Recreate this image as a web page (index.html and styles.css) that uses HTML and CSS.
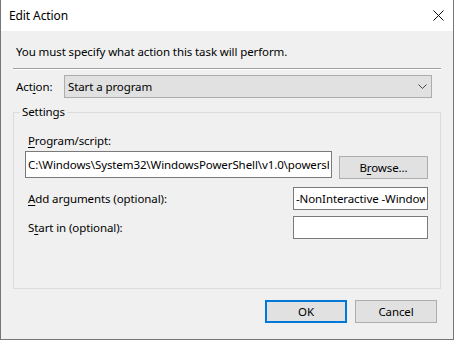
FILE: index.html
```html
<!DOCTYPE html>
<html lang="en">
<head>
    <meta charset="UTF-8">
    <meta name="viewport" content="width=device-width, initial-scale=1.0">
    <title>Edit Action</title>
    <link rel="stylesheet" href="styles.css">
</head>
<body>

    <div class="window">
        <div class="titlebar">
            <span class="title">Edit Action</span>
            <svg class="close" width="11" height="11" viewBox="0 0 11 11">
                <path d="M0.5 0.5 L10.5 10.5 M10.5 0.5 L0.5 10.5" stroke="#111" stroke-width="1" fill="none"/>
            </svg>
        </div>

        <div class="content">
            <p class="intro">You must specify what action this task will perform.</p>
            <div class="separator"></div>

            <div class="action-row">
                <label class="action-label">Act<u>i</u>on:</label>
                <div class="combo">
                    <span>Start a program</span>
                    <svg class="chevron" width="9" height="5" viewBox="0 0 9 5">
                        <path d="M0.5 0.5 L4.5 4.5 L8.5 0.5" stroke="#444" stroke-width="1" fill="none"/>
                    </svg>
                </div>
            </div>

            <fieldset class="settings">
                <legend>Settings</legend>
                <label class="field-label"><u>P</u>rogram/script:</label>
                <div class="program-row">
                    <input class="textbox program" type="text" value="C:\Windows\System32\WindowsPowerShell\v1.0\powershell.exe">
                    <button class="btn browse">B<u>r</u>owse...</button>
                </div>
                <div class="option-grid">
                    <label class="field-label"><u>A</u>dd arguments (optional):</label>
                    <input class="textbox" type="text" value="-NonInteractive -WindowStyle Hidden">
                    <label class="field-label">S<u>t</u>art in (optional):</label>
                    <input class="textbox" type="text" value="">
                </div>
            </fieldset>

            <div class="button-row">
                <button class="btn btn-default">OK</button>
                <button class="btn">Cancel</button>
            </div>
        </div>
    </div>

</body>
</html>
```

FILE: styles.css
```css
* {
    margin: 0;
    padding: 0;
    box-sizing: border-box;
}
body {
    font-family: "Noto Sans", "Open Sans", sans-serif;
    font-size: 11.5px;
    letter-spacing: -0.1px;
    line-height: 16px;
    color: #000;
    overflow: hidden;
    background-color: #fff;
}
u {
    text-decoration-thickness: 1px;
    text-underline-offset: 2px;
}
.window {
    width: 454px;
    height: 340px;
    display: flex;
    flex-direction: column;
    border: 1px solid #767676;
    border-top: none;
    background-color: #f0f0f0;
}
.titlebar {
    height: 31px;
    flex-shrink: 0;
    display: flex;
    justify-content: space-between;
    align-items: center;
    background-color: #fff;
    padding: 0 9px 0 8px;
}
.title {
    font-size: 12px;
}
.close {
    display: block;
}
.content {
    flex: 1;
    padding: 0 12px;
}
.intro {
    margin-top: 13px;
    padding-left: 3px;
}
.separator {
    margin-top: 8px;
    border-top: 1px solid #a0a0a0;
    border-bottom: 1px solid #fff;
}
.action-row {
    display: flex;
    align-items: center;
    margin-top: 5px;
    padding-left: 3px;
}
.action-label {
    width: 48px;
}
.combo {
    flex: 1;
    height: 23px;
    margin-right: 9px;
    display: flex;
    justify-content: space-between;
    align-items: center;
    padding: 0 4px 0 3px;
    background-color: #e1e1e1;
    border: 1px solid #adadad;
}
.chevron {
    display: block;
}
.settings {
    margin-top: 6px;
    border: 1px solid #dcdcdc;
    padding: 13px 12px 49px 11px;
}
.settings legend {
    margin-left: -5px;
    padding: 0 2px;
    line-height: 16px;
}
.field-label {
    display: block;
    padding-left: 3px;
}
.program-row {
    display: flex;
    align-items: flex-start;
    margin-top: 2px;
}
.textbox {
    font-family: inherit;
    font-size: inherit;
    letter-spacing: inherit;
    color: #000;
    height: 23px;
    padding: 0 2px;
    border: 1px solid #7a7a7a;
    background-color: #fff;
    outline: none;
}
.textbox.program {
    width: 307px;
    height: 27px;
}
.btn {
    font-family: inherit;
    font-size: inherit;
    letter-spacing: inherit;
    color: #000;
    width: 82px;
    height: 23px;
    background-color: #e1e1e1;
    border: 1px solid #adadad;
}
.btn.browse {
    width: 89px;
    margin-left: 7px;
    margin-top: 5px;
}
.btn-default {
    border: 2px solid #0078d7;
}
.option-grid {
    display: grid;
    grid-template-columns: 1fr 135px;
    align-items: center;
    row-gap: 6px;
    margin-top: 8px;
}
.option-grid .textbox {
    width: 135px;
}
.button-row {
    display: flex;
    justify-content: flex-end;
    gap: 8px;
    margin-top: 11px;
    padding-right: 4px;
}
```
